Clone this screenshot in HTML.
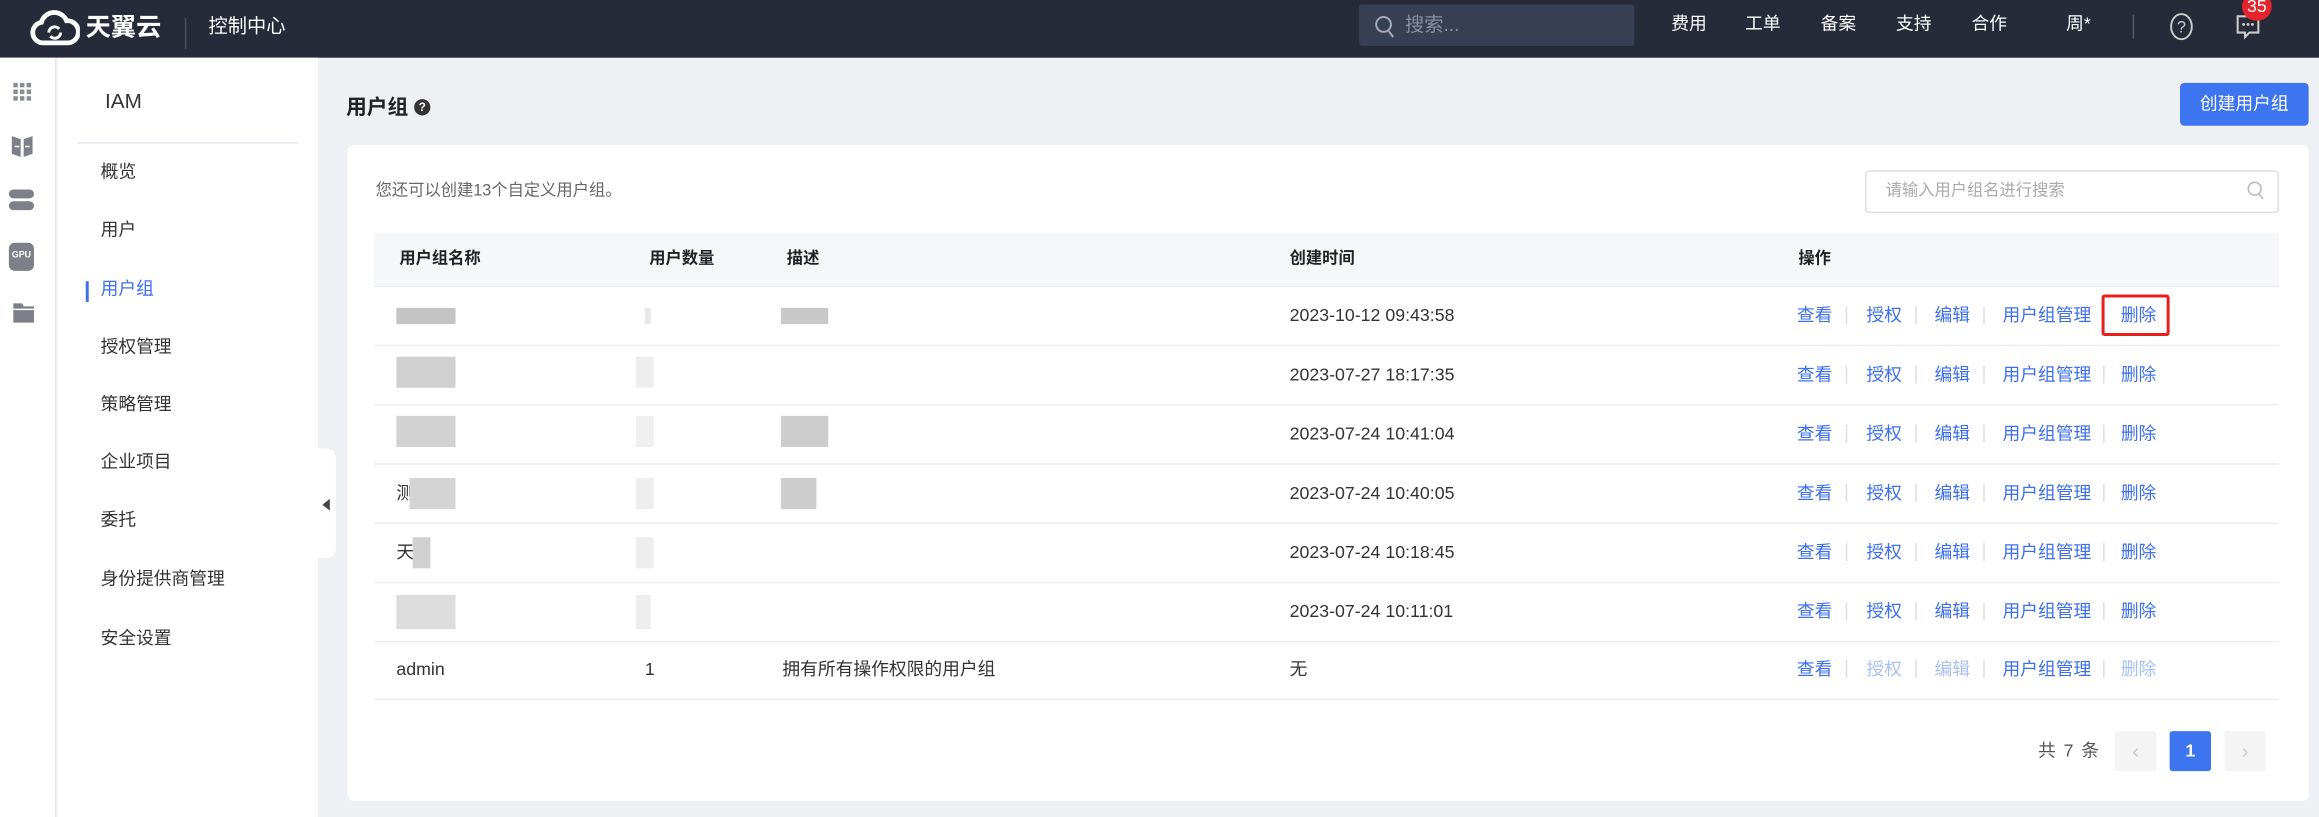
<!DOCTYPE html>
<html><head><meta charset="utf-8"><style>
*{margin:0;padding:0;box-sizing:border-box}
html,body{width:2319px;height:817px;overflow:hidden;background:#eef0f3}
#w{position:absolute;left:0;top:0;width:1568px;height:552px;transform:scale(1.47895,1.48007);transform-origin:0 0;font-family:"Liberation Sans","Noto Sans CJK SC",sans-serif;font-size:12px;color:#333;background:#eef0f3}
.a{position:absolute;white-space:nowrap}
.t{position:absolute;white-space:nowrap;line-height:16px}
.blur{position:absolute;background:#d6d6d6}
.lk{color:#3d6ff0}
.dis{color:#a9c0f7}
.sep{position:absolute;width:1px;height:12px;background:#ddd}
</style></head><body><div id="w">
<!-- header -->
<div class="a" style="left:0;top:0;width:1568px;height:39px;background:#262a39"></div>
<svg class="a" style="left:20px;top:3px" width="34" height="32" viewBox="0 0 34 32"><path d="M9 26a7 7 0 0 1-1-13.9A9 9 0 0 1 25 11a6.5 6.5 0 0 1 1 15z" fill="none" stroke="#fff" stroke-width="3.2"/><path d="M13 19a4 4 0 0 1 7-2.5M21 19a4 4 0 0 1-7 2.5" fill="none" stroke="#fff" stroke-width="2"/></svg>
<div class="t" style="left:58px;top:8px;font-size:17px;line-height:22px;color:#fff;font-weight:bold">天翼云</div>
<div class="a" style="left:125px;top:12px;width:1px;height:21px;background:#4a4f60"></div>
<div class="t" style="left:141px;top:10px;font-size:13px;color:#fff">控制中心</div>
<div class="a" style="left:919px;top:3px;width:186px;height:28px;background:#373f55;border-radius:2px"></div>
<svg class="a" style="left:929px;top:10px" width="14" height="16" viewBox="0 0 14 16"><circle cx="6.5" cy="6.5" r="5" fill="none" stroke="#aab" stroke-width="1.3"/><path d="M10 11l3 4" stroke="#aab" stroke-width="1.3"/></svg>
<div class="t" style="left:950px;top:9px;font-size:13px;color:#8a90a0">搜索...</div>
<div class="t" style="left:1130px;top:8px;font-size:12px;color:#fff">费用</div>
<div class="t" style="left:1180px;top:8px;font-size:12px;color:#fff">工单</div>
<div class="t" style="left:1231px;top:8px;font-size:12px;color:#fff">备案</div>
<div class="t" style="left:1282px;top:8px;font-size:12px;color:#fff">支持</div>
<div class="t" style="left:1333px;top:8px;font-size:12px;color:#fff">合作</div>
<div class="t" style="left:1397px;top:8px;font-size:12px;color:#fff">周*</div>
<div class="a" style="left:1442px;top:10px;width:1px;height:16px;background:#555a6a"></div>
<svg class="a" style="left:1466px;top:8px" width="18" height="20" viewBox="0 0 18 20"><ellipse cx="9" cy="10" rx="7" ry="8.5" fill="none" stroke="#ccc" stroke-width="1.3"/><text x="9" y="14" text-anchor="middle" font-size="11" fill="#ccc" font-family="Liberation Sans">?</text></svg>
<svg class="a" style="left:1511px;top:9px" width="18" height="18" viewBox="0 0 18 18"><path d="M2 2h14v11H10l-3 3v-3H2z" fill="none" stroke="#ccc" stroke-width="1.4"/><circle cx="6" cy="7.5" r="1" fill="#ccc"/><circle cx="9" cy="7.5" r="1" fill="#ccc"/><circle cx="12" cy="7.5" r="1" fill="#ccc"/></svg>
<div class="a" style="left:1516px;top:-5px;width:20px;height:19px;border-radius:10px;background:#e5242b;color:#fff;font-size:12px;line-height:19px;text-align:center">35</div>
<!-- icon bar -->
<div class="a" style="left:0;top:39px;width:38px;height:513px;background:#fff;border-right:1px solid #e8e9ee"></div>
<svg class="a" style="left:8px;top:55px" width="14" height="14" viewBox="0 0 14 14" fill="#8a8d95"><rect x="1" y="1" width="3" height="3"/><rect x="5.5" y="1" width="3" height="3"/><rect x="10" y="1" width="3" height="3"/><rect x="1" y="5.5" width="3" height="3"/><rect x="5.5" y="5.5" width="3" height="3"/><rect x="10" y="5.5" width="3" height="3"/><rect x="1" y="10" width="3" height="3"/><rect x="5.5" y="10" width="3" height="3"/><rect x="10" y="10" width="3" height="3"/></svg>
<svg class="a" style="left:7px;top:91px" width="16" height="16" viewBox="0 0 16 16"><path d="M1 1l6 2v12l-6-2zM15 1l-6 2v12l6-2z" fill="#7d8089"/><path d="M3 8h3M13 8h-3" stroke="#fff"/></svg>
<svg class="a" style="left:5px;top:127px" width="20" height="16" viewBox="0 0 20 16"><rect x="1" y="1" width="17" height="6" rx="3" fill="#7d8089"/><rect x="1" y="9" width="17" height="6" rx="3" fill="#7d8089"/></svg>
<div class="a" style="left:6px;top:164px;width:17px;height:19px;border-radius:4px;background:#7d8089;color:#fff;font-size:6px;line-height:19px;text-align:center;font-weight:bold">GPU</div>
<svg class="a" style="left:8px;top:204px" width="16" height="15" viewBox="0 0 16 15"><path d="M1 1h6l1 2h7v11H1z" fill="#7d8089"/><path d="M1 5h14" stroke="#fff"/></svg>
<!-- sidebar -->
<div class="a" style="left:39px;top:39px;width:176px;height:513px;background:#fff"></div>
<div class="t" style="left:71px;top:60px;font-size:14px;color:#333">IAM</div>
<div class="a" style="left:52px;top:96px;width:150px;height:1px;background:#e6e8ee"></div>
<div class="t" style="left:68px;top:108px;font-size:12px">概览</div>
<div class="t" style="left:68px;top:147px;font-size:12px">用户</div>
<div class="a" style="left:58px;top:190px;width:2px;height:14px;background:#3d6ff0"></div>
<div class="t lk" style="left:68px;top:187px;font-size:12px">用户组</div>
<div class="t" style="left:68px;top:226px;font-size:12px">授权管理</div>
<div class="t" style="left:68px;top:265px;font-size:12px">策略管理</div>
<div class="t" style="left:68px;top:304px;font-size:12px">企业项目</div>
<div class="t" style="left:68px;top:343px;font-size:12px">委托</div>
<div class="t" style="left:68px;top:383px;font-size:12px">身份提供商管理</div>
<div class="t" style="left:68px;top:423px;font-size:12px">安全设置</div>
<div class="a" style="left:214px;top:303px;width:13px;height:74px;background:#fff;border-radius:0 6px 6px 0"></div>
<div class="a" style="left:218px;top:337px;width:0;height:0;border-top:4px solid transparent;border-bottom:4px solid transparent;border-right:5px solid #444"></div>
<!-- main -->
<div class="t" style="left:234px;top:64px;font-size:14px;font-weight:bold;color:#222">用户组</div>
<div class="a" style="left:280px;top:67px;width:11px;height:11px;border-radius:50%;background:#333;color:#fff;font-size:8px;line-height:11px;text-align:center;font-weight:bold">?</div>
<div class="a" style="left:1474px;top:56px;width:87px;height:29px;background:#3d74f0;border-radius:3px;color:#fff;font-size:12px;line-height:29px;text-align:center">创建用户组</div>
<div class="a" style="left:235px;top:98px;width:1326px;height:443px;background:#fff;border-radius:4px"></div>
<div class="t" style="left:254px;top:121px;font-size:11px;color:#666">您还可以创建13个自定义用户组。</div>
<div class="a" style="left:1261px;top:115px;width:280px;height:29px;border:1px solid #dcdee3;border-radius:3px"></div>
<div class="t" style="left:1275px;top:121px;font-size:11px;color:#aaa">请输入用户组名进行搜索</div>
<svg class="a" style="left:1519px;top:122px" width="12" height="14" viewBox="0 0 12 14"><circle cx="5.5" cy="5.5" r="4.3" fill="none" stroke="#bbb" stroke-width="1.1"/><path d="M8.5 9l2.5 3.5" stroke="#bbb" stroke-width="1.1"/></svg>
<div class="a" style="left:253px;top:157px;width:1288px;height:37px;background:#f6f7f9;border-bottom:1px solid #eceef2"></div>
<div class="t" style="left:270px;top:167px;font-weight:bold;color:#222;font-size:11px">用户组名称</div>
<div class="t" style="left:439px;top:167px;font-weight:bold;color:#222;font-size:11px">用户数量</div>
<div class="t" style="left:532px;top:167px;font-weight:bold;color:#222;font-size:11px">描述</div>
<div class="t" style="left:872px;top:167px;font-weight:bold;color:#222;font-size:11px">创建时间</div>
<div class="t" style="left:1216px;top:167px;font-weight:bold;color:#222;font-size:11px">操作</div>

<div class="a" style="left:253px;top:233px;width:1288px;height:1px;background:#eceef2"></div>
<div class="a" style="left:253px;top:273px;width:1288px;height:1px;background:#eceef2"></div>
<div class="a" style="left:253px;top:313px;width:1288px;height:1px;background:#eceef2"></div>
<div class="a" style="left:253px;top:353px;width:1288px;height:1px;background:#eceef2"></div>
<div class="a" style="left:253px;top:393px;width:1288px;height:1px;background:#eceef2"></div>
<div class="a" style="left:253px;top:433px;width:1288px;height:1px;background:#eceef2"></div>
<div class="a" style="left:253px;top:472px;width:1288px;height:1px;background:#eceef2"></div>

<div class="blur" style="left:268px;top:208px;width:40px;height:11px;background:#c4c4c4"></div>
<div class="blur" style="left:436px;top:208px;width:4px;height:11px;background:#e8e8e8"></div>
<div class="blur" style="left:528px;top:208px;width:32px;height:11px;background:#c8c8c8"></div>
<div class="blur" style="left:268px;top:241px;width:40px;height:21px;background:#d0d0d0"></div>
<div class="blur" style="left:430px;top:241px;width:12px;height:21px;background:#eee"></div>
<div class="blur" style="left:268px;top:281px;width:40px;height:21px;background:#d2d2d2"></div>
<div class="blur" style="left:430px;top:281px;width:12px;height:21px;background:#f0f0f0"></div>
<div class="blur" style="left:528px;top:281px;width:32px;height:21px;background:#cdcdcd"></div>
<div class="t" style="left:268px;top:325px">测</div>
<div class="blur" style="left:277px;top:323px;width:31px;height:21px;background:#d4d4d4"></div>
<div class="blur" style="left:430px;top:323px;width:12px;height:21px;background:#eee"></div>
<div class="blur" style="left:528px;top:323px;width:24px;height:21px;background:#cdcdcd"></div>
<div class="t" style="left:268px;top:365px">天</div>
<div class="blur" style="left:279px;top:363px;width:12px;height:21px;background:#d0d0d0"></div>
<div class="blur" style="left:430px;top:363px;width:12px;height:21px;background:#eee"></div>
<div class="blur" style="left:268px;top:402px;width:40px;height:23px;background:#dcdcdc"></div>
<div class="blur" style="left:430px;top:402px;width:10px;height:23px;background:#eee"></div>
<div class="t" style="left:268px;top:444px">admin</div>
<div class="t" style="left:436px;top:444px">1</div>
<div class="t" style="left:529px;top:444px">拥有所有操作权限的用户组</div>
<div class="t" style="left:872px;top:444px">无</div>

<div class="t" style="left:872px;top:205px">2023-10-12 09:43:58</div>
<div class="t" style="left:872px;top:245px">2023-07-27 18:17:35</div>
<div class="t" style="left:872px;top:285px">2023-07-24 10:41:04</div>
<div class="t" style="left:872px;top:325px">2023-07-24 10:40:05</div>
<div class="t" style="left:872px;top:365px">2023-07-24 10:18:45</div>
<div class="t" style="left:872px;top:405px">2023-07-24 10:11:01</div>

<div id="ops"></div>
<div class="a" style="left:1421px;top:199px;width:46px;height:28px;border:2px solid #e8201c;border-radius:2px"></div>

<div class="t" style="left:1378px;top:499px;color:#555;letter-spacing:1px">共 7 条</div>
<div class="a" style="left:1430px;top:494px;width:28px;height:27px;background:#f4f4f5;border-radius:2px;color:#ccc;text-align:center;line-height:27px;font-size:14px">‹</div>
<div class="a" style="left:1467px;top:494px;width:28px;height:27px;background:#3d74f0;border-radius:2px;color:#fff;text-align:center;line-height:27px;font-weight:bold">1</div>
<div class="a" style="left:1504px;top:494px;width:28px;height:27px;background:#f4f4f5;border-radius:2px;color:#ccc;text-align:center;line-height:27px;font-size:14px">›</div>

<script>
var h='',ys=[205,245,285,325,365,405,444];
ys.forEach(function(y,i){
 var d=(i==6)?'dis':'lk';
 h+='<div class="t lk" style="left:1215px;top:'+y+'px">查看</div>';
 h+='<div class="t '+d+'" style="left:1262px;top:'+y+'px">授权</div>';
 h+='<div class="t '+d+'" style="left:1308px;top:'+y+'px">编辑</div>';
 h+='<div class="t lk" style="left:1354px;top:'+y+'px">用户组管理</div>';
 h+='<div class="t '+d+'" style="left:1434px;top:'+y+'px">删除</div>';
 [1248,1295,1341,1422].forEach(function(x){h+='<div class="sep" style="left:'+x+'px;top:'+(y+2)+'px"></div>';});
});
document.getElementById('ops').outerHTML=h;
</script>
</div></body></html>
